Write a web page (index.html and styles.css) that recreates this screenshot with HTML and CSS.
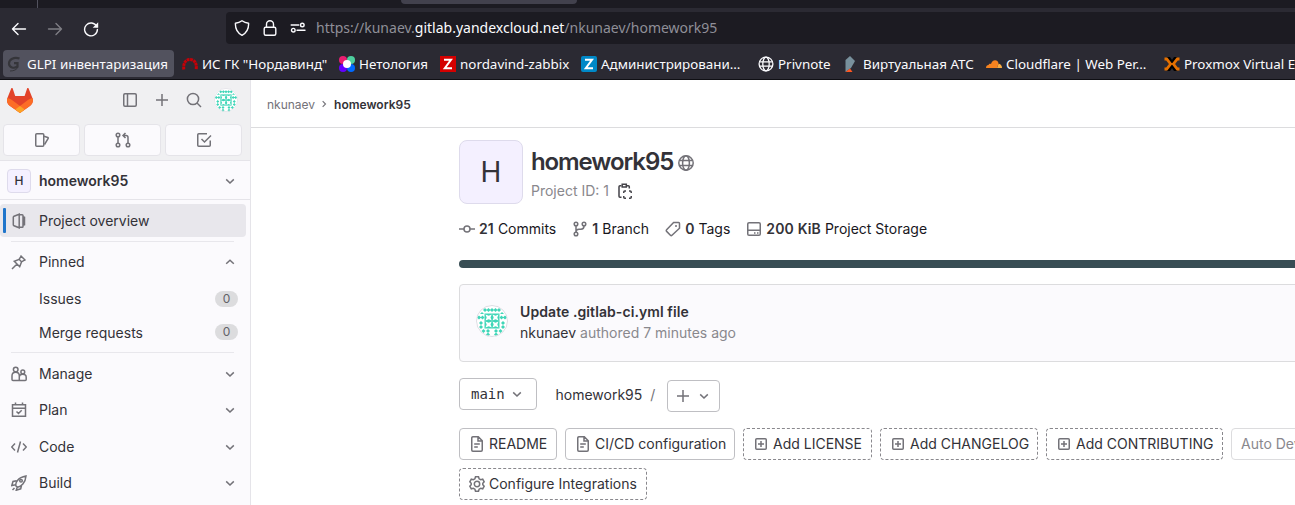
FILE: index.html
```html
<!DOCTYPE html>
<html lang="en">
<head>
<meta charset="utf-8">
<title>nkunaev / homework95 · GitLab</title>
<link rel="stylesheet" href="styles.css">
</head>
<body>
<svg class="sprite" aria-hidden="true">
  <symbol id="chev-down" viewBox="0 0 16 16"><path d="M4.2 6.4 8 10l3.8-3.6"/></symbol>
  <symbol id="chev-up" viewBox="0 0 16 16"><path d="M4.2 9.8 8 6.2l3.8 3.6"/></symbol>
  <symbol id="chev-right" viewBox="0 0 16 16"><path d="M6.2 4.2 10 8l-3.8 3.8"/></symbol>
  <symbol id="plus" viewBox="0 0 16 16"><path d="M8 2v12M2 8h12"/></symbol>
  <symbol id="plus-square" viewBox="0 0 16 16"><rect x="2.75" y="2.75" width="10.5" height="10.5" rx="1"/><path d="M8 5v6M5 8h6"/></symbol>
  <symbol id="doc" viewBox="0 0 16 16"><path d="M9.3.75H3.9a1.2 1.2 0 0 0-1.15 1.15v12.2c0 .6.5 1.15 1.15 1.15h8.2c.6 0 1.15-.5 1.15-1.15V4.7L9.3.75ZM9 1v4h4M5.2 8h5.600M5.2 11h3.600"/></symbol>
  <symbol id="identicon" viewBox="0 0 32 32">
    <circle class="ident-bg" cx="16" cy="16" r="16"/>
    <g class="ident-ink">
      <path d="M7 5l2-2 2 2-2 2zM10.500 5l2-2 2 2-2 2zM14 5l2-2 2 2-2 2zM17.500 5l2-2 2 2-2 2zM21 5l2-2 2 2-2 2z"/>
      <path d="M.800 12.500l2.200-2 2.200 2-2.200 2zM4.500 12.500l2-2 2 2-2 2zM23.500 12.500l2-2 2 2-2 2zM26.800 12.500l2.200-2 2.200 2-2.200 2zM4 9l2-2 2 2zM24 9l2-2 2 2z"/>
      <path d="M3 18l2-2 2 2-2 2zM25 18l2-2 2 2-2 2zM3 22l2-2 2 2-2 2zM25 22l2-2 2 2-2 2z"/>
      <path d="M10 26l2-2 2 2-2 2zM18 26l2-2 2 2-2 2zM10 29.500l2-2 2 2-2 2zM18 29.500l2-2 2 2-2 2zM5.500 26l2-2 2 2-2 2zM22.500 26l2-2 2 2-2 2z"/>
      <rect x="8.500" y="8.500" width="15" height="15"/>
    </g>
    <path class="ident-cut" d="M9.500 9.500l3.200 1.200 3-1.200-1.200 3 1.200 3-3-1.200-3.200 1.200 1.200-3zM16.500 9.500l3 1.200 3-1.200-1.200 3 1.200 3-3-1.200-3 1.200 1.200-3zM9.500 16.500l3.200 1.200 3-1.200-1.200 3 1.200 3-3-1.200-3.200 1.200 1.200-3zM16.500 16.500l3 1.200 3-1.200-1.200 3 1.200 3-3-1.200-3 1.200 1.200-3z"/>
    <circle class="ident-rim" cx="16" cy="16" r="15.500"/>
  </symbol>
</svg>

<header class="browser">
  <div class="tabstrip"><span class="tab-edge"></span><span class="tab-hint"></span></div>
  <div class="toolbar">
    <div class="nav-icons">
      <svg class="nav-i" viewBox="0 0 16 16"><path d="M14.500 8H1.500M7 2.500 1.500 8 7 13.500"/></svg>
      <svg class="nav-i dim" viewBox="0 0 16 16"><path d="M1.500 8h13M9 2.500 14.500 8 9 13.500"/></svg>
      <svg class="nav-i" viewBox="0 0 16 16"><path d="M13.700 5.500A6.400 6.400 0 1 0 14.400 8.500"/><path class="solid" d="M15.200 1.300v5.500H9.700z"/></svg>
    </div>
    <div class="urlbar">
      <svg class="nav-i" viewBox="0 0 16 16"><path d="M8 .8c2 1.500 4 2.200 6.600 2.400C14.800 8 13.500 12.500 8 15.300 2.500 12.500 1.200 8 1.400 3.200 4 3 6 2.300 8 .8z"/></svg>
      <svg class="nav-i" viewBox="0 0 16 16"><rect x="2.200" y="7.300" width="11.600" height="8" rx="1.500"/><path d="M4.500 7V4.300a3.500 3.500 0 0 1 7 0V7"/></svg>
      <svg class="nav-i" viewBox="0 0 16 16"><path d="M1.200 5h7.500M7 10.200h8"/><circle cx="12.300" cy="5" r="1.800"/><circle cx="3.300" cy="10.200" r="1.800"/></svg>
      <span class="url">https://kunaev.<b>gitlab.yandexcloud.net</b>/nkunaev/homework95</span>
    </div>
  </div>
  <nav class="bookmarks">
    <span class="bm current"><svg class="fav" viewBox="0 0 16 16"><path fill="none" stroke="#35353a" stroke-width="2.200" d="M13.500 2.500C8 .5 3 3.500 3 7.500s5 5.500 8.500 3V7.200H8"/><path fill="none" stroke="#35353a" d="M12 11c-1 2.500-4 4-8 4"/></svg><span>GLPI инвентаризация</span></span>
    <span class="bm"><svg class="fav" viewBox="0 0 16 16"><path fill="none" stroke="#c60007" stroke-width="3" stroke-dasharray="2.800 .6" d="M1.800 13.500C1 6.500 4 3.500 8 3.500s7 3 6.200 10"/></svg><span>ИС ГК "Нордавинд"</span></span>
    <span class="bm"><svg class="fav" viewBox="0 0 16 16"><circle cx="4" cy="4" r="4" fill="#e91e71"/><circle cx="12" cy="4" r="4" fill="#4dcf9e"/><circle cx="4" cy="12" r="4" fill="#6500ff"/><circle cx="12" cy="12" r="4" fill="#0069ff"/><circle cx="8" cy="8" r="4" fill="#fff"/></svg><span>Нетология</span></span>
    <span class="bm"><svg class="fav" viewBox="0 0 16 16"><path fill="#d40000" d="M0 0h16v16H0z"/><path fill="none" stroke="#fff" stroke-width="2" d="M4 3.800h7L4.800 12.200H12"/></svg><span>nordavind-zabbix</span></span>
    <span class="bm"><svg class="fav" viewBox="0 0 16 16"><rect width="16" height="16" rx="2" fill="#0088c7"/><path fill="none" stroke="#fff" stroke-width="2" d="M4 3.800h7L4.800 12.200H12"/></svg><span>Администрировани…</span></span>
    <span class="bm"><svg class="fav" viewBox="0 0 16 16"><g fill="none" stroke="#fbfbfe" stroke-width="1.300"><circle cx="8" cy="8" r="6.900"/><ellipse cx="8" cy="8" rx="3.200" ry="6.900"/><path d="M1.500 5.800h13M1.500 10.200h13"/></g></svg><span>Privnote</span></span>
    <span class="bm"><svg class="fav" viewBox="0 0 16 16"><path fill="#78909c" d="M2.500 4 7 0l5 5-4 7-5.500 4z"/><path fill="#ff5722" d="M7 12.500 9.500 16H2.500z"/></svg><span>Виртуальная АТС</span></span>
    <span class="bm"><svg class="fav" viewBox="0 0 16 16"><path fill="#f6821f" d="M0 12c0-2 1-3 2.500-3C3 7.500 4 7.500 5 8c1-5 7-5 7.500-.5L11 12z"/><path fill="#fbad41" d="M11 12l1.500-4.200c2 0 3.500 1.700 3.500 4.200z"/></svg><span>Cloudflare | Web Per…</span></span>
    <span class="bm"><svg class="fav" viewBox="0 0 16 16"><path fill="#000" d="M2.500 1h3.500l2 3 2-3h3.500L8 8.500zM2.500 15h3.500l2-3 2 3h3.500L8 7.500z"/><path fill="none" stroke="#e57000" stroke-width="2.800" d="M.500 3h2.200L6.600 8l-3.900 5H.500M15.500 3h-2.200L9.400 8l3.900 5h2.200"/></svg><span>Proxmox Virtual Environment</span></span>
  </nav>
</header>

<div class="app">
  <aside class="sidebar">
    <div class="side-top">
      <div class="side-tools">
        <svg class="tanuki" viewBox="0 0 26 25"><path fill="#e24329" d="m25.500 10-.1-.1L21.600.5c-.2-.6-1.200-.6-1.500 0l-2.500 7.600H8.200L5.700.5C5.400-.1 4.500-.1 4.200.5L.4 9.900c-1 2.800-.2 6 2.300 7.900L13 25l10.200-7.200c2.500-2 3.300-5 2.300-7.800z"/><path fill="#fc6d26" d="M25.500 10a11.500 11.500 0 0 0-4.600 2.100L13 18 5 12.100A11.500 11.500 0 0 0 .4 10c-1 2.700-.2 5.900 2.300 7.800L13 25l10.200-7.200c2.500-2 3.300-5.100 2.300-7.800z"/><path fill="#fca326" d="m8.200 21.600 4.800 3.400 4.700-3.400-4.700-3.700z"/></svg>
        <svg class="i tool" viewBox="0 0 16 16"><rect x="1.750" y="1.750" width="12.500" height="12.500" rx="1.200"/><path d="M5.500 2v12"/></svg>
        <svg class="i tool"><use href="#plus"/></svg>
        <svg class="i tool" viewBox="0 0 16 16"><circle cx="7" cy="7" r="5.600"/><path d="m11 11 4 4"/></svg>
        <svg class="me"><use href="#identicon"/></svg>
      </div>
      <div class="side-buttons">
        <span><svg class="i" viewBox="0 0 16 16"><rect x="1.750" y="1.750" width="8" height="12.500" rx="1"/><path d="M10 4.200l3.800 1.300c.4.200.6.500.400.9L10.500 12.500"/></svg></span>
        <span><svg class="i" viewBox="0 0 16 16"><circle cx="3" cy="3" r="1.800"/><circle cx="3" cy="13" r="1.800"/><circle cx="13" cy="13" r="1.800"/><path d="M3 5v6M13 11V5.500c0-1.300-.8-2-2-2H8.500M10.500 1 8 3.500 10.500 6"/></svg></span>
        <span><svg class="i" viewBox="0 0 16 16"><path d="M11 1.750H2.800c-.6 0-1.050.4-1.050 1v10.500c0 .6.400 1 1 1h10.500c.6 0 1-.4 1-1V8.500M5.500 7l3 3L15 3.500"/></svg></span>
      </div>
    </div>
    <div class="context"><span class="mini-avatar">H</span><b>homework95</b><svg class="i"><use href="#chev-down"/></svg></div>
    <nav class="menu">
      <a class="item active"><svg class="i" viewBox="0 0 16 16"><path d="M8.200 1.200 3 3.200c-.4.200-.7.500-.7 1v7.600c0 .5.300.8.700 1l5.200 2zM8.200 1.700h3c.4 0 .8.300.8.800v11c0 .4-.4.800-.8.800h-3M12 3.600l1.500.6v7.600l-1.500.6"/></svg><span>Project overview</span></a>
      <hr>
      <a class="item"><svg class="i" viewBox="0 0 16 16"><path d="m9.500 1.500 5 5M10.200 2.200 8 5.500 3.300 7.300l5.400 5.400L10.500 8l3.300-2.200M6 10l-5 5M8.300 5.500l2.200 2.200"/></svg><span>Pinned</span><svg class="i chev"><use href="#chev-up"/></svg></a>
      <a class="item sub"><span>Issues</span><em>0</em></a>
      <a class="item sub merge"><span>Merge requests</span><em>0</em></a>
      <hr class="low">
      <a class="item manage"><svg class="i" viewBox="0 0 16 16"><circle cx="4.700" cy="3.500" r="2.300"/><circle cx="11.800" cy="6" r="1.900"/><path d="M8 14.500H2c-.6 0-1-.4-1-1V9.800C1 7.800 2.500 6.300 4.700 6.300S8.300 7.800 8.300 9.800v4.700h5.900c.6 0 1-.4 1-1v-2.200c0-2-1.300-3-3.400-3s-3.500 1-3.500 3"/></svg><span>Manage</span><svg class="i chev"><use href="#chev-down"/></svg></a>
      <a class="item plan"><svg class="i" viewBox="0 0 16 16"><path d="M1.500 2.800h13v11.500h-13zM1.500 6.200h13M4.500.5v2.300M11.500.5v2.300M5.500 9.500l2 2 3.200-3.200"/></svg><span>Plan</span><svg class="i chev"><use href="#chev-down"/></svg></a>
      <a class="item code"><svg class="i" viewBox="0 0 16 16"><path d="M4 4.500.7 8 4 11.500M12 4.500 15.300 8 12 11.500M9.500 2.500l-3 11"/></svg><span>Code</span><svg class="i chev"><use href="#chev-down"/></svg></a>
      <a class="item"><svg class="i" viewBox="0 0 16 16"><path d="M5 11C4 8 6.500 2.500 15 1 14.500 8 10 11.500 6.500 12.200zM5.500 5.700 2 6.500.8 10.500l3.700-.8M10.500 10.500l-.8 3.300-4.400 1.400.9-3M1.500 15l2-2"/><circle cx="10" cy="5.800" r="1.300"/></svg><span>Build</span><svg class="i chev"><use href="#chev-down"/></svg></a>
    </nav>
  </aside>

  <main class="main">
    <div class="crumbs"><span>nkunaev</span><svg class="i"><use href="#chev-right"/></svg><b>homework95</b></div>
    <div class="content">
      <section class="project">
        <div class="avatar">H</div>
        <div class="project-text">
          <h1><span>homework95</span><svg class="i" viewBox="0 0 16 16"><circle cx="8" cy="8" r="7.200"/><ellipse cx="8" cy="8" rx="3.400" ry="7.200"/><path d="M1.500 5.600h13M1.500 10.400h13"/></svg></h1>
          <p><span>Project ID: 1</span><svg class="i" viewBox="0 0 16 16"><path d="M4.500 2.750H3c-.6 0-1 .4-1 1v9.500c0 .6.400 1 1 1h1.500M10 2.750h1.300c.6 0 1 .4 1 1V5.500"/><path d="M5.200 1.200h4.100v2.800H5.200z"/><path d="M6.750 10V9c0-.6.400-1 1-1H9M12 8h1.200c.6 0 1 .4 1 1v1M14.250 13v1.200c0 .6-.4 1-1 1H12M9 15.250H7.750c-.6 0-1-.4-1-1V13"/></svg></p>
        </div>
      </section>
      <ul class="stats">
        <li><svg class="i" viewBox="0 0 16 16"><circle cx="8" cy="8" r="3"/><path d="M0 8h5M11 8h5"/></svg><span><b>21</b> Commits</span></li>
        <li><svg class="i" viewBox="0 0 16 16"><circle cx="4" cy="3" r="1.800"/><circle cx="4" cy="13" r="1.800"/><circle cx="12" cy="3" r="1.800"/><path d="M4 5v6M12 5c0 2.500-1 3.200-3 3.200H7c-2 0-3 .8-3 2.800"/></svg><span><b>1</b> Branch</span></li>
        <li><svg class="i" viewBox="0 0 16 16"><path d="M8.600 1.500h5c.5 0 .9.400.9.900v4.800L7 14.200c-.5.500-1.100.5-1.600 0L1.600 10.400c-.5-.5-.5-1.100 0-1.600z"/><circle class="dot" cx="11" cy="5" r="1"/></svg><span><b>0</b> Tags</span></li>
        <li><svg class="i" viewBox="0 0 16 16"><rect x="1.750" y="1.750" width="12.500" height="12.500" rx="1.300"/><path d="M2 9.300h12M8 11.900h1.500M11 11.900h1.500"/></svg><span><b>200 KiB</b> Project Storage</span></li>
      </ul>
      <div class="language-bar"></div>
      <section class="commit">
        <svg class="author"><use href="#identicon"/></svg>
        <div><b>Update .gitlab-ci.yml file</b><p><span>nkunaev</span> authored 7 minutes ago</p></div>
      </section>
      <div class="tree-nav">
        <span class="btn ref"><code>main</code><svg class="i"><use href="#chev-down"/></svg></span>
        <span class="path">homework95<i>/</i></span>
        <span class="btn add"><svg class="i"><use href="#plus"/></svg><svg class="i"><use href="#chev-down"/></svg></span>
      </div>
      <div class="files">
        <span class="btn w-readme"><svg class="i"><use href="#doc"/></svg>README</span>
        <span class="btn w-ci"><svg class="i"><use href="#doc"/></svg>CI/CD configuration</span>
        <span class="btn dashed w-license"><svg class="i"><use href="#plus-square"/></svg>Add LICENSE</span>
        <span class="btn dashed w-changelog"><svg class="i"><use href="#plus-square"/></svg>Add CHANGELOG</span>
        <span class="btn dashed w-contributing"><svg class="i"><use href="#plus-square"/></svg>Add CONTRIBUTING</span>
        <span class="btn muted">Auto DevOps enabled</span>
      </div>
      <div class="files">
        <span class="btn dashed w-config"><svg class="i" viewBox="0 0 16 16"><path d="M6.500.8h3l.6 2 1.600.9 2-.5 1.500 2.600L13.800 7.200v1.600l1.400 1.400-1.500 2.600-2-.5-1.600.9-.6 2h-3l-.6-2-1.600-.9-2 .5L.8 10.200l1.400-1.400V7.200L.8 5.800l1.500-2.600 2 .5 1.600-.9z"/><circle cx="8" cy="8" r="2.700"/></svg>Configure Integrations</span>
      </div>
    </div>
  </main>
</div>
</body>
</html>
```

FILE: styles.css
```css
* { box-sizing: border-box; }
html, body { height: 505px; overflow: hidden; }
body { margin: 0; background: #fff; color: #333238; font: 14px/20px Inter, "Liberation Sans", sans-serif; }
p, h1, ul { margin: 0; padding: 0; }
.sprite { position: absolute; width: 0; height: 0; }
svg { flex: none; display: block; }
.i { width: 16px; height: 16px; fill: none; stroke: #737278; stroke-width: 1.5; }
.i .dot { fill: #737278; stroke: none; }
.ident-bg { fill: #fff; }
.ident-ink { fill: #40d6b8; }
.ident-cut { fill: #fff; }
.ident-rim { fill: none; stroke: #dddce3; }

/* Browser chrome */
.browser { height: 80px; background: #2b2a33; border-bottom: 1px solid #0f0f14; font-family: "Noto Sans", sans-serif; color: #fbfbfe; overflow: hidden; }
.tabstrip { display: flex; height: 8px; background: #1c1b22; }
.tab-edge { width: 1px; height: 8px; margin-left: 37px; background: #52525e; }
.tab-hint { width: 176px; height: 4px; margin-left: 363px; background: #42414d; border-radius: 0 0 4px 4px; }
.toolbar { display: flex; height: 40px; padding-top: 4px; }
.nav-icons { display: flex; align-items: center; gap: 20px; width: 226px; height: 33px; padding-left: 11px; }
.nav-i { width: 16px; height: 16px; fill: none; stroke: #fbfbfe; stroke-width: 1.4; stroke-linecap: round; stroke-linejoin: round; }
.nav-i .solid { fill: #fbfbfe; stroke: none; }
.dim { opacity: .4; }
.urlbar { display: flex; align-items: center; flex: 1; height: 32px; padding-left: 8px; gap: 12px; background: #1c1b22; border-radius: 4px 0 0 4px; }
.url { margin-left: -2px; font-size: 14px; color: #8f8f98; white-space: nowrap; }
.url b { font-weight: 400; color: #fbfbfe; }
.bookmarks { display: grid; grid-template-columns: 178px 157px 101px 141px 177px 85px 143px 178px 200px; padding: 2px 0 0 3px; font-size: 13.400px; line-height: 27px; white-space: nowrap; }
.bm { display: flex; align-items: center; gap: 4px; padding-left: 1px; }
.bm > span { padding-top: 1px; line-height: 26px; }
.bm.current { width: 171px; gap: 5px; padding-left: 3px; background: #52525e; border-radius: 4px; }
.fav { width: 16px; height: 16px; margin-top: 1px; }

.app { display: flex; height: 425px; }

/* Sidebar */
.sidebar { width: 251px; flex: none; background: #fbfafd; border-right: 1px solid #e5e4e9; }
.side-top { height: 81px; background: #f0f0f2; border-bottom: 1px solid #e5e4e9; }
.side-tools { display: flex; align-items: center; height: 40px; padding: 0 12px 0 7px; }
.tanuki { width: 26px; height: 25px; margin-right: 89px; }
.tool { margin-right: 16px; }
.tool:nth-of-type(4) { margin-right: 12px; }
.me { width: 24px; height: 24px; }
.side-buttons { display: flex; gap: 4px; padding: 4px 8px 0 3px; }
.side-buttons span { display: flex; align-items: center; justify-content: center; width: 77px; height: 32px; background: #fbfafd; border: 1px solid #e5e4e9; border-radius: 4px; }
.context { display: flex; align-items: center; height: 39px; padding: 1px 12px 0 7px; border-bottom: 1px solid #e5e4e9; }
.context b { flex: 1; margin-left: 8px; padding-top: 1px; font-weight: 600; }
.mini-avatar { display: flex; align-items: center; justify-content: center; width: 24px; height: 24px; background: #f4f0ff; border: 1px solid #dedbec; border-radius: 4px; font-size: 12px; font-weight: 500; }
.menu { padding-top: 4px; }
.item { display: flex; align-items: center; height: 36.500px; padding: 0 12px 0 11px; }
.item > span { flex: 1; margin-left: 12px; line-height: 20px; }
.item.active { position: relative; width: 246px; height: 33px; border-radius: 4px; background: #e8e7ec; }
.item.active::before { content: ""; position: absolute; left: 3px; top: 4px; width: 3px; height: 25px; background: #1f75cb; border-radius: 1px; }
hr { height: 1px; margin: 4px 16px 2px 11px; border: 0; background: #e8e7ec; }
.low { margin: 4px 16px 3px 11px; }
.sub { height: 36px; }
.sub > span { margin-left: 28px; }
.merge { height: 31px; }
.merge > span, .manage > span { height: 17px; line-height: 18px; overflow: hidden; }
.manage { height: 36px; }
.plan { height: 37px; }
.sub em { width: 23px; height: 16px; border-radius: 8px; background: #dcdcde; color: #626168; font-size: 12px; font-style: normal; line-height: 16px; text-align: center; }

/* Main column */
.main { flex: 1; min-width: 0; overflow: hidden; }
.crumbs { display: flex; align-items: center; height: 48px; padding: 2px 0 0 16px; border-bottom: 1px solid #dcdcde; font-size: 12px; color: #737278; }
.crumbs .i { width: 12px; height: 12px; margin: -1px 4px 0 3px; }
.crumbs b { font-weight: 600; color: #333238; }
.content { width: 1200px; padding: 12px 0 0 208px; }
.project { display: flex; gap: 8px; }
.avatar { display: flex; align-items: center; justify-content: center; width: 64px; height: 64px; border: 1px solid #dedbec; border-radius: 8px; background: #f4f0ff; font-size: 28px; }
.project-text h1 { display: flex; align-items: center; gap: 5px; height: 43px; font-size: 24px; font-weight: 600; line-height: 28px; letter-spacing: -1.100px; }
.project-text h1 .i { margin-top: 3px; }
.project-text p { display: flex; align-items: center; gap: 8px; height: 16px; color: #89888d; }
.project-text p .i { stroke: #434248; }
.stats { display: flex; height: 20px; margin-top: 15px; gap: 16px; list-style: none; color: #18171d; white-space: nowrap; }
.stats li { display: flex; align-items: center; gap: 4px; }
.stats b { color: #333238; font-weight: 600; letter-spacing: .15px; }
.language-bar { height: 8px; margin-top: 21px; border-radius: 4px; background: #384d54; }
.commit { display: flex; height: 78px; margin-top: 16px; padding: 16px 16px 0; gap: 12px; background: #fbfafd; border: 1px solid #dcdcde; border-radius: 4px; }
.author { width: 32px; height: 32px; margin-top: 4px; }
.commit b { display: block; font-weight: 600; line-height: 21px; letter-spacing: .08px; }
.commit p { line-height: 21px; color: #89888d; }
.commit p span { color: #333238; }
.tree-nav { display: flex; height: 34px; margin-top: 16px; }
.btn { display: flex; align-items: center; height: 32px; padding-left: 9px; gap: 4px; border: 1px solid #bfbfc3; border-radius: 4px; white-space: nowrap; }
.ref { width: 78px; padding-left: 11px; }
code { font: 14px/20px "DejaVu Sans Mono", monospace; }
.path { width: 130px; padding: 7px 0 0 18.500px; }
.path i { margin-left: 8px; font-style: normal; color: #737278; }
.add { width: 53px; margin-top: 2px; padding-left: 7px; gap: 5px; }
.files { display: flex; gap: 8px; margin-top: 16px; }
.files + .files { margin-top: 8px; }
.dashed { border: 1px dashed #89888d; }
.muted { color: #89888d; border-color: #dcdcde; }
.w-readme { width: 98px; }
.w-ci { width: 170px; }
.w-license { width: 129px; }
.w-changelog { width: 158px; }
.w-contributing { width: 177px; }
.w-config { width: 188px; }
```
